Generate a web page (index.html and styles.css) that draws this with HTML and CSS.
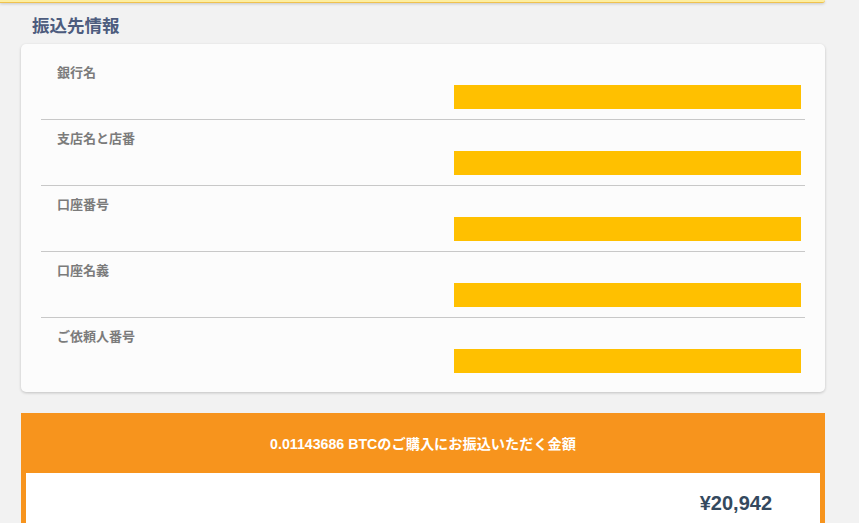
FILE: index.html
```html
<!DOCTYPE html>
<html lang="ja">
<head>
<meta charset="utf-8">
<title>振込先情報</title>
<link rel="stylesheet" href="styles.css">
</head>
<body>
<div class="notice"></div>
<main class="wrap">
  <h2 class="title">振込先情報</h2>
  <section class="card">
    <div class="row">
      <div class="label">銀行名</div>
      <div class="value"></div>
    </div>
    <div class="row">
      <div class="label">支店名と店番</div>
      <div class="value"></div>
    </div>
    <div class="row">
      <div class="label">口座番号</div>
      <div class="value"></div>
    </div>
    <div class="row">
      <div class="label">口座名義</div>
      <div class="value"></div>
    </div>
    <div class="row">
      <div class="label">ご依頼人番号</div>
      <div class="value"></div>
    </div>
  </section>
  <section class="amount">
    <div class="amount-head">0.01143686 BTCのご購入にお振込いただく金額</div>
    <div class="amount-body">
      <span class="price">¥20,942</span>
    </div>
  </section>
</main>
</body>
</html>
```

FILE: styles.css
```css
html, body {
  margin: 0;
  padding: 0;
}
body {
  background: #f2f2f2;
  font-family: "Liberation Sans", "Noto Sans CJK JP", sans-serif;
  height: 523px;
  overflow: hidden;
}
.notice {
  width: 825px;
  height: 2px;
  background: #fdeea0;
  border-bottom: 1px solid #f0c24e;
  border-radius: 0 0 3px 0;
  box-shadow: 0 1px 3px rgba(0, 0, 0, 0.18);
}
.wrap {
  margin-left: 21px;
  width: 804px;
}
.title {
  margin: 11px 0 6px 11px;
  font-size: 17.5px;
  line-height: 24px;
  font-weight: bold;
  color: #4d5c7e;
}
.card {
  background: #fcfcfc;
  border-radius: 5px;
  box-shadow: 0 1px 3px rgba(0, 0, 0, 0.2);
  padding: 10px 20px 9px;
}
.row {
  display: flex;
  flex-direction: column;
  padding: 11px 0 10px;
  border-bottom: 1px solid #c8c8c8;
}
.row:last-child {
  border-bottom: none;
}
.label {
  padding-left: 16px;
  font-size: 13px;
  line-height: 16px;
  font-weight: bold;
  color: #7b7b7b;
}
.value {
  margin: 4px 4px 0 auto;
  width: 347px;
  height: 24px;
  background: #ffc000;
}
.amount {
  margin-top: 21px;
  background: #f7941d;
  padding: 0 5px;
}
.amount-head {
  height: 60px;
  display: flex;
  align-items: center;
  justify-content: center;
  color: #ffffff;
  font-size: 14.2px;
  font-weight: bold;
}
.amount-body {
  background: #ffffff;
  padding: 18px 48px 20px;
  display: flex;
  justify-content: flex-end;
}
.price {
  font-size: 20px;
  line-height: 24px;
  font-weight: bold;
  color: #34495e;
}
```
